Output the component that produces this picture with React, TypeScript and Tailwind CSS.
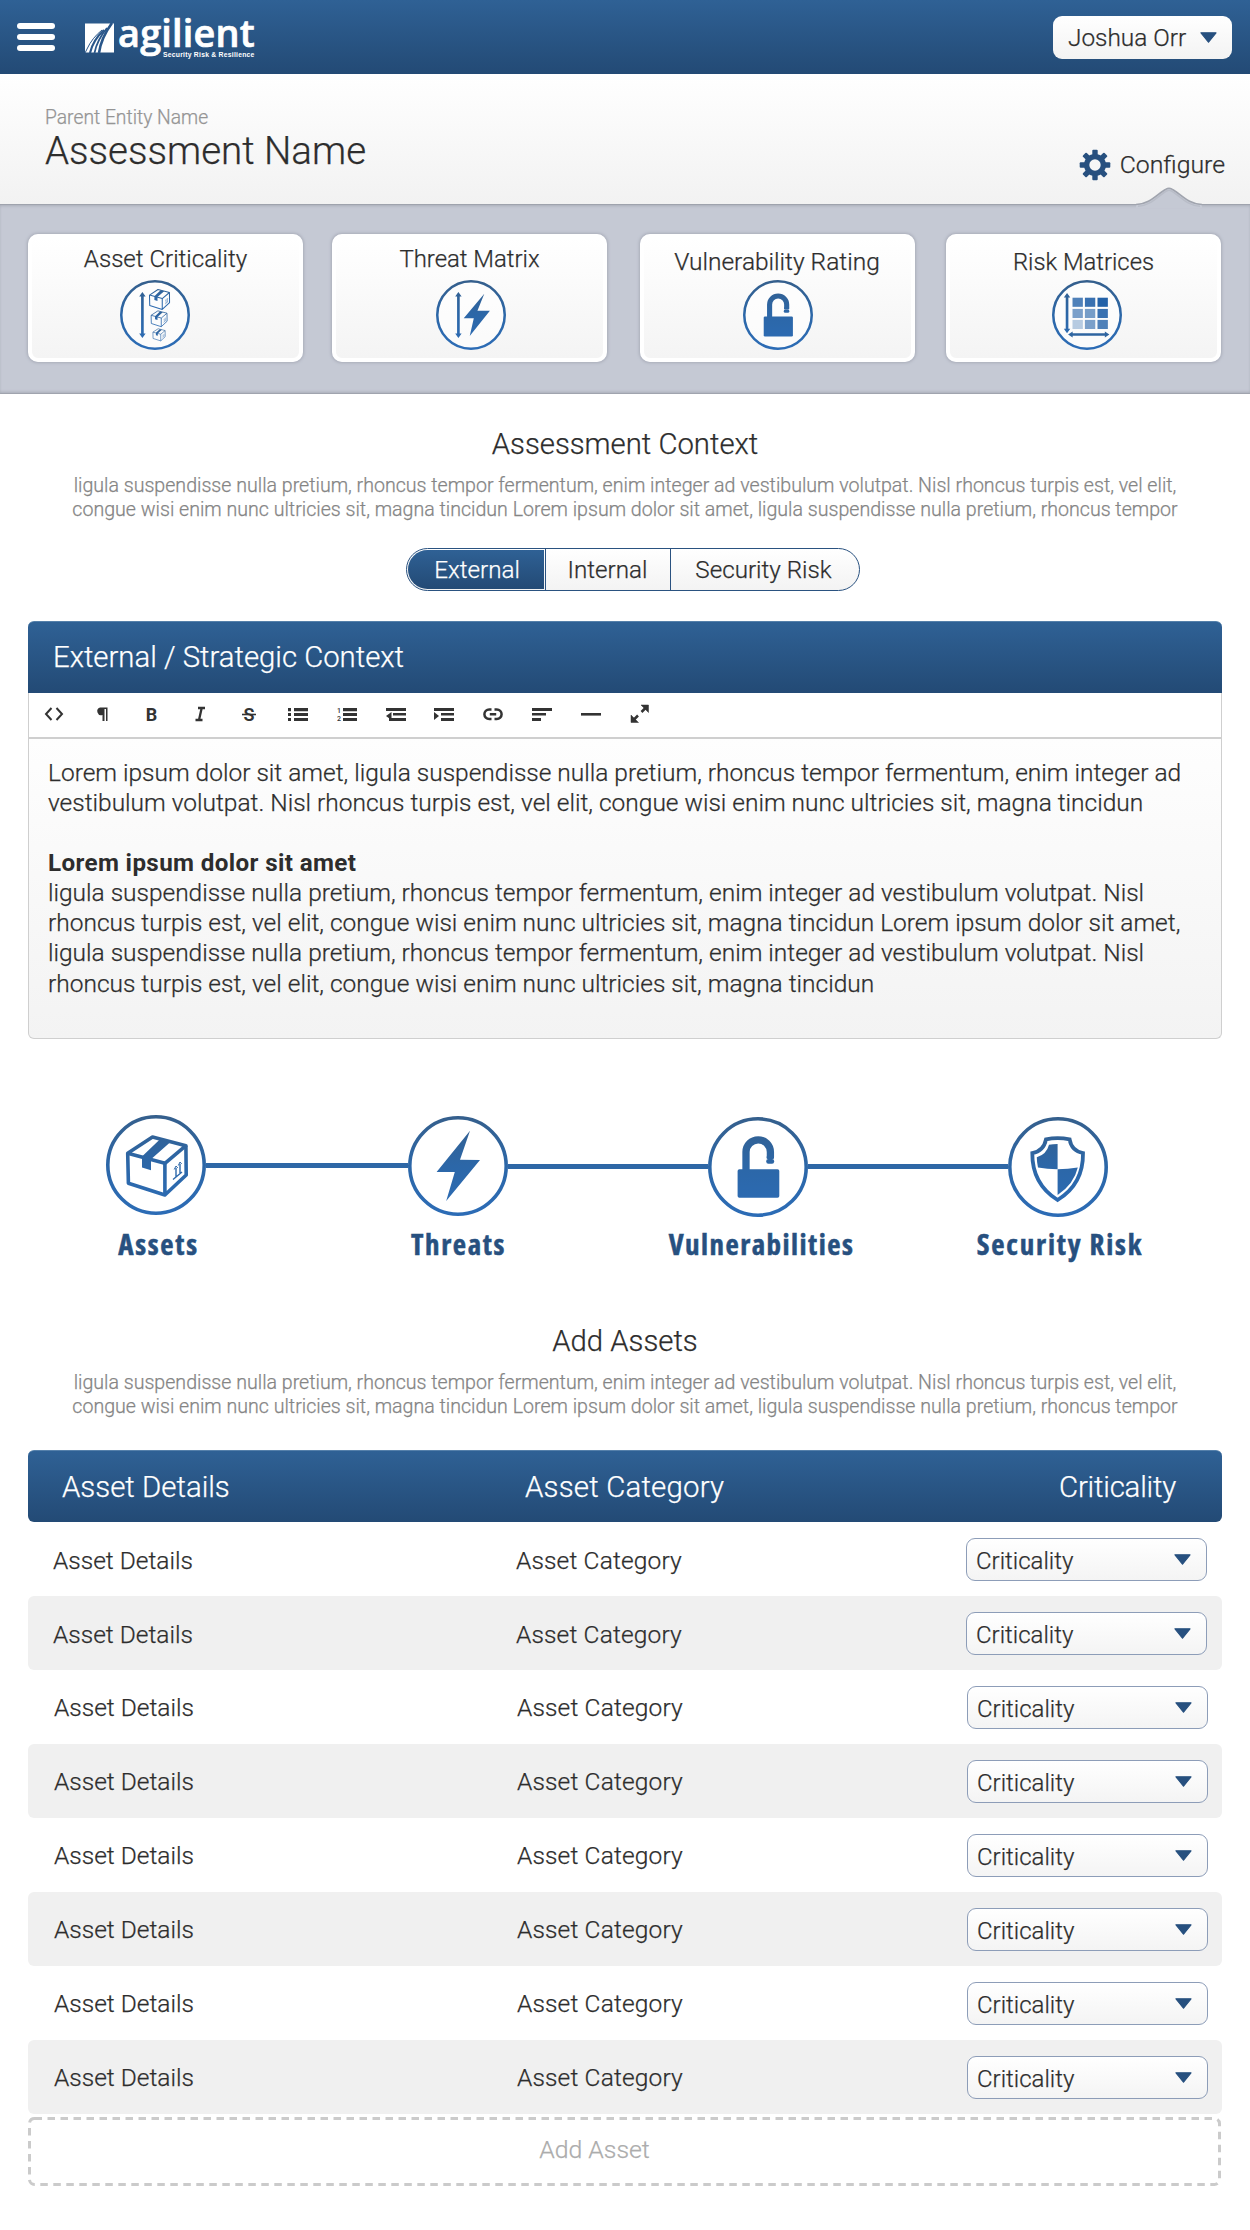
import React from 'react';

const LOREM = [
  'ligula suspendisse nulla pretium, rhoncus tempor fermentum, enim integer ad vestibulum volutpat. Nisl rhoncus turpis est, vel elit,',
  'congue wisi enim nunc ultricies sit, magna tincidun Lorem ipsum dolor sit amet, ligula suspendisse nulla pretium, rhoncus tempor',
];

const INK = 'url(#ink)';

/* Shared vertical gradient for every circular badge. */
function Defs() {
  return (
    <svg width="0" height="0" className="absolute">
      <defs>
        <linearGradient id="ink" gradientUnits="userSpaceOnUse" x1="0" y1="0" x2="0" y2="100">
          <stop offset="0" stopColor="#355f8c" />
          <stop offset="0.5" stopColor="#2c67a8" />
          <stop offset="1" stopColor="#2c6cb6" />
        </linearGradient>
      </defs>
    </svg>
  );
}

function Box({ weight = 3.6 }: { weight?: number }) {
  return (
    <g fill="none" stroke={INK} strokeWidth={weight} strokeLinejoin="round">
      <path d="M46.5 22 79.9 30.7 58.9 48.3 21.7 38.3Z" />
      <path d="M21.7 38.3 22.4 68.3 58.9 80V48.3M58.9 80 80.2 60 79.9 30.7" />
      <path d="M54 24.3 64.5 27 45 44.2V55.2L36 52.5V41.6Z" fill={INK} stroke="none" />
      <path d="M70 61.5V53M74 58V49M67 64.5 76 57" strokeWidth="1.4" />
      <path d="m68.2 54.5 1.8-3.5 1.8 2M72.3 50.5 74 47l1.7 2" strokeWidth="1" />
    </g>
  );
}

function Bolt() {
  return <path d="M62 14.7 52 43.7 72 44 38.2 85 46.8 56H28.6Z" fill={INK} />;
}

function Lock() {
  return (
    <g>
      <rect x="29.6" y="52.3" width="41.7" height="28.4" rx="1.8" fill={INK} />
      <path d="M38 53V35a12.2 12.2 0 0 1 24.4 0V40.5" fill="none" stroke={INK} strokeWidth="7.3" />
      <rect x="58.6" y="39" width="7.4" height="3" rx="1" fill={INK} />
      <rect x="58.2" y="42" width="8" height="4.8" rx="2.2" fill={INK} />
    </g>
  );
}

function Shield() {
  return (
    <g>
      <path
        d="M38 22.3Q49.6 20 61.6 22.3 63.5 34 75 36 75.5 67 49.6 83 24 67 24.3 36 35.7 34 38 22.3Z"
        fill="none"
        stroke={INK}
        strokeWidth="3.8"
      />
      <path d="M49.6 27V52.3Q39 52 30 50.5 28.8 45 28.8 40.3 38.5 37.5 41 27.8 45 27 49.6 27Z" fill={INK} />
      <path d="M49.6 52.3Q60 52 69.8 50.5 66 67 49.6 78Z" fill={INK} />
    </g>
  );
}

function Ring({ children, thickness = 3.6 }: { children: React.ReactNode; thickness?: number }) {
  return (
    <>
      <circle cx="50" cy="50" r={50 - thickness / 2} fill="#fff" fillOpacity="0.6" stroke={INK} strokeWidth={thickness} />
      {children}
    </>
  );
}

function VArrow({ x, y1, y2 }: { x: number; y1: number; y2: number }) {
  return (
    <g fill={INK}>
      <path d={`M${x - 1.9} ${y1 + 4}h3.8V${y2 - 4}h-3.8Z`} />
      <path d={`M${x} ${y1}l4.6 6.5h-9.2zM${x} ${y2}l4.6-6.5h-9.2z`} />
    </g>
  );
}

function CriticalityIcon() {
  return (
    <Ring>
      <VArrow x={32} y1={17} y2={83} />
      <g transform="translate(31.5 2.8) scale(0.49)"><Box weight={3} /></g>
      <g transform="translate(36 35.5) scale(0.39)"><Box weight={3} /></g>
      <g transform="translate(40.5 63) scale(0.3)"><Box weight={3} /></g>
    </Ring>
  );
}

function ThreatIcon() {
  return (
    <Ring>
      <VArrow x={32} y1={17} y2={83} />
      <path d="M69 19.5 59.2 44 77 44 48.2 80 54 54.5H39.6Z" fill={INK} />
    </Ring>
  );
}

function MatrixIcon() {
  const xs = [29.3, 47, 65];
  const ys = [25.3, 41.3, 57];
  const alpha = [[0.8, 0.9, 1], [0.6, 0.62, 0.9], [0.32, 0.6, 0.8]];
  return (
    <Ring>
      {ys.map((y, r) =>
        xs.map((x, c) => <rect key={`${r}${c}`} x={x} y={y} width="14.8" height="13" fill="#2462a8" opacity={alpha[r][c]} />),
      )}
      <VArrow x={21.5} y1={18.5} y2={76} />
      <g fill="#2f65a0">
        <path d="M27 76H77v3.6H27z" />
        <path d="M23 77.8l6.5-4.3v8.6zM82 77.8l-6.5-4.3v8.6z" />
      </g>
    </Ring>
  );
}

function Caret() {
  return (
    <svg width="17" height="11" viewBox="0 0 17 11" className="shrink-0">
      <path d="M1 .8h15L8.5 10.2z" fill="#27507f" stroke="#27507f" strokeLinejoin="round" strokeWidth="1.2" />
    </svg>
  );
}

function Header() {
  return (
    <header className="flex h-[74px] bg-linear-to-b from-[#2f6195] to-[#234a75] pl-[17px] pr-[18px]">
      <div className="mt-[23px] flex w-[38px] flex-col gap-[5px]">
        <span className="h-[6px] rounded-full bg-white" />
        <span className="h-[6px] rounded-full bg-white" />
        <span className="h-[6px] rounded-full bg-white" />
      </div>
      <svg width="30" height="30" viewBox="0 0 30 30" className="ml-[30px] mt-[23px]">
        <rect x="0" y="0.5" width="29" height="29" fill="#fff" />
        <g fill="none" stroke="#29568a">
          <path d="M0 30 2 26Q7 15 17 7" strokeWidth="1" />
          <path d="M5 30Q8 17 19 7" strokeWidth="2.2" />
          <path d="M9.5 30Q12 17 22 5" strokeWidth="1.8" />
          <path d="M14 30Q16 15 27 0" strokeWidth="2.6" />
        </g>
      </svg>
      <div className="relative ml-[3px] h-[74px]">
        <div className="mt-[8px] font-['Open_Sans'] text-[37.8px] font-semibold leading-[50px] tracking-[0.2px] text-white [-webkit-text-stroke:0.7px_white]">agilient</div>
        <div className="absolute left-[45px] top-[50px] whitespace-nowrap font-['Liberation_Sans'] text-[6.8px] font-bold leading-[9px] tracking-[0.24px] text-white [-webkit-text-stroke:0px]">
          Security Risk &amp; Resilience
        </div>
      </div>
      <div className="ml-auto mt-[16px] flex h-[43px] w-[179px] items-center justify-between rounded-[9px] bg-linear-to-b from-white to-[#f3f3f3] pl-[15px] pr-[15px] text-[24.4px]">
        <span className="pt-[2px]">Joshua Orr</span>
        <Caret />
      </div>
    </header>
  );
}

function Gear() {
  return (
    <svg width="32" height="32" viewBox="-16 -16 32 32">
      <g fill="#27507f">
        {[0, 45, 90, 135].map((a) => (
          <rect key={a} x="-2.7" y="-15.3" width="5.4" height="30.6" rx="1" transform={`rotate(${a})`} />
        ))}
      </g>
      <circle r="8.3" fill="none" stroke="#27507f" strokeWidth="5.4" />
      <circle r="5.7" fill="#f6f6f6" />
    </svg>
  );
}

function TitleBar() {
  return (
    <section className="relative h-[130px] bg-linear-to-b from-white to-[#f2f2f2] pl-[45px] pt-[32px]">
      <div className="text-[19.3px] leading-[23px] text-[#959595]">Parent Entity Name</div>
      <h1 className="text-[38.5px] leading-[44px]">Assessment Name</h1>
      <div className="absolute right-[25px] top-[74px] flex items-center gap-[9px]">
        <Gear />
        <span className="text-[24.8px] leading-[34px]">Configure</span>
      </div>
      <svg width="66" height="22" viewBox="0 0 66 22" className="absolute left-[1136px] top-[112px]">
        <path d="M0 18.5C14 18.5 22 7 30 3.2Q33 1.2 36 3.2C44 7 52 18.5 66 18.5V22H0Z" fill="#c5c9d4" />
        <path d="M0 18.5C14 18.5 22 7 30 3.2Q33 1.2 36 3.2C44 7 52 18.5 66 18.5" fill="none" stroke="#a0a4ae" strokeWidth="1.6" />
        <path d="M2 20.2C15 20 23 8.7 30.5 5Q33 3.5 35.5 5C43 8.7 51 20 64 20.2" fill="none" stroke="#b9bdc8" strokeWidth="1.5" />
      </svg>
    </section>
  );
}

const CARDS = [
  { title: 'Asset Criticality', icon: <CriticalityIcon />, card: 'ml-[28px]', text: 'mt-[7px] text-[24.1px]', pic: 'top-[42px] left-[88px]' },
  { title: 'Threat Matrix', icon: <ThreatIcon />, card: 'ml-[29px]', text: 'mt-[7px] text-[23.9px]', pic: 'top-[42px] left-[99.5px]' },
  { title: 'Vulnerability Rating', icon: <Ring><Lock /></Ring>, card: 'ml-[33px]', text: 'mt-[10px] text-[24.5px] pr-[1px]', pic: 'top-[42px] left-[99px]' },
  { title: 'Risk Matrices', icon: <MatrixIcon />, card: 'ml-[31px]', text: 'mt-[10px] text-[23.8px]', pic: 'top-[42px] left-[102px]' },
];

function ConfigureBand() {
  return (
    <section className="flex h-[190px] bg-[#c5c9d4] pt-[30px] shadow-[inset_0_1px_0_#9fa3ad,inset_0_3px_3px_-1px_#a9adb8,inset_0_-1px_0_#a0a4ae,inset_0_-3px_3px_-1px_#a9adb8]">
      {CARDS.map((c) => (
        <div
          key={c.title}
          className={`relative h-[128px] w-[275px] shrink-0 rounded-[10px] border-4 border-white bg-linear-to-b from-white to-[#f4f4f4] text-center shadow-[0_0_3px_1px_#a9adb9] ${c.card}`}
        >
          <div className={`leading-[28px] ${c.text}`}>{c.title}</div>
          <svg width="70" height="70" viewBox="0 0 100 100" className={`absolute ${c.pic}`}>
            {c.icon}
          </svg>
        </div>
      ))}
    </section>
  );
}

function Intro({ title, className }: { title: string; className: string }) {
  return (
    <div className={`text-center ${className}`}>
      <h2 className="text-[29.3px] leading-[36px]">{title}</h2>
      <p className="mt-[12px] whitespace-nowrap text-[19.6px] leading-[24px] text-[#858585]">
        {LOREM[0]}
        <br />
        {LOREM[1]}
      </p>
    </div>
  );
}

function Tabs() {
  return (
    <div className="ml-[406px] mt-[26px] flex h-[43px] w-[454px] items-stretch rounded-full border border-[#2a5280] bg-linear-to-b from-white to-[#f3f3f3] text-[24.2px] leading-[43px]">
      <div className="flex w-[139px] border-r border-[#2a5280] p-px">
        <div className="flex-1 rounded-l-full bg-linear-to-b from-[#2f6195] to-[#234a75] pl-[2px] text-center leading-[41px] text-white">External</div>
      </div>
      <div className="w-[125px] border-r border-[#2a5280] pr-[1px] text-center">Internal</div>
      <div className="flex-1 pr-[3px] text-center">Security Risk</div>
    </div>
  );
}

const TOOLS: React.ReactNode[] = [
  <path d="M7.5 4 2 10l5.5 6M12.5 4 18 10l-5.5 6" fill="none" stroke="#333" strokeWidth="2" />,
  <path d="M7 3.5h7.5V17h-1.5V5h-1.5V17H9.5v-6A3.8 3.8 0 0 1 7 3.5Z" fill="#333" />,
  <text x="9.5" y="16.5" textAnchor="middle" fontSize="18" fontWeight="700" fill="#333" fontFamily="Roboto">B</text>,
  <path d="M8 4h7M5.5 16h7M11.7 4 9 16" stroke="#333" strokeWidth="2.3" fill="none" />,
  <g>
    <text x="10" y="16.5" textAnchor="middle" fontSize="18" fontWeight="600" fill="#333" fontFamily="Roboto">S</text>
    <path d="M3 10.5h14" stroke="#333" strokeWidth="1.6" />
  </g>,
  <g fill="#333"><path d="M6 4h14v3.2H6zM6 9h14v3H6zM6 14h14v3H6zM0 4h3v3.2H0zM0 9h3v3H0zM0 14h3v3H0z" /></g>,
  <g fill="#333">
    <path d="M6 4h14v3.2H6zM6 9h14v3H6zM6 14h14v3H6z" />
    <text x="0" y="8.5" fontSize="7" fontWeight="500" fontFamily="Roboto">1</text>
    <text x="0" y="17" fontSize="7" fontWeight="500" fontFamily="Roboto">2</text>
  </g>,
  <g fill="#333"><path d="M0 4h20v3H0zM7 9h13v2.6H7zM7 14h13v3H3v-3zM0 12 5.5 8v8z" /></g>,
  <g fill="#333"><path d="M0 4h20v3H0zM7 9h13v2.6H7zM7 14h13v3H7zM0 8v8l5-4z" /></g>,
  <g fill="none" stroke="#333" strokeWidth="2.5"><path d="M8.5 15H6.2a4.8 4.8 0 0 1 0-9.6h2.3M11.5 5.4h2.3a4.8 4.8 0 0 1 0 9.6h-2.3M6.8 10.2h6.4" /></g>,
  <g fill="#333"><path d="M0 4h20v3H0zM0 9h14v2.6H0zM0 14h9v3H0z" /></g>,
  <path d="M0 9h20v2.6H0z" fill="#333" />,
  <g fill="#333" stroke="#333"><path d="M11 1h7.5v7.5zM1 11v7.5h7.5z" strokeWidth="0.5" /><path d="m11.5 8 4-4M4 15.5l4-4" strokeWidth="2.5" /></g>,
];

function Editor() {
  return (
    <section className="ml-[28px] mt-[30px] h-[418px] w-[1194px]">
      <div className="h-[72px] rounded-t-[6px] border-t border-[#5580aa] bg-linear-to-b from-[#2f6195] to-[#234a75] pl-[25px] text-[29.3px] leading-[71px] text-white">
        External / Strategic Context
      </div>
      <div className="flex h-[46px] items-center gap-[28.8px] border-x border-b-2 border-[#cfcfcf] bg-white pb-[2px] pl-[15px]">
        {TOOLS.map((t, i) => (
          <svg key={i} width="20" height="20" viewBox="0 0 20 20" className="shrink-0">
            {t}
          </svg>
        ))}
      </div>
      <div className="h-[300px] whitespace-nowrap rounded-b-[6px] border border-t-0 border-[#cfcfcf] bg-linear-to-b from-[#fefefe] to-[#f3f3f3] pl-[19px] pt-[19px] text-[24.49px] leading-[30.1px]">
        <p>
          Lorem ipsum dolor sit amet, ligula suspendisse nulla pretium, rhoncus tempor fermentum, enim integer ad
          <br />
          vestibulum volutpat. Nisl rhoncus turpis est, vel elit, congue wisi enim nunc ultricies sit, magna tincidun
        </p>
        <p className="mt-[30px] text-[24.2px] font-bold tracking-[0.37px] [-webkit-text-stroke:0px]">Lorem ipsum dolor sit amet</p>
        <p>
          ligula suspendisse nulla pretium, rhoncus tempor fermentum, enim integer ad vestibulum volutpat. Nisl
          <br />
          rhoncus turpis est, vel elit, congue wisi enim nunc ultricies sit, magna tincidun Lorem ipsum dolor sit amet,
          <br />
          ligula suspendisse nulla pretium, rhoncus tempor fermentum, enim integer ad vestibulum volutpat. Nisl
          <br />
          rhoncus turpis est, vel elit, congue wisi enim nunc ultricies sit, magna tincidun
        </p>
      </div>
    </section>
  );
}

const STEPS = [
  { label: 'Assets', icon: <Box />, top: 'mt-0', text: 'mt-[11px] ml-[5px] tracking-[1.7px]', line: '' },
  { label: 'Threats', icon: <Bolt />, top: 'mt-px', text: 'mt-[10px] ml-[1px] tracking-[1.6px]', line: 'mt-[48px] w-[202px]' },
  { label: 'Vulnerabilities', icon: <Lock />, top: 'mt-[2px]', text: 'mt-[9px] ml-[7px] tracking-[1.45px]', line: 'mt-[49px] flex-1' },
  { label: 'Security Risk', icon: <Shield />, top: 'mt-[2px]', text: 'mt-[9px] ml-[4px] tracking-[1.8px]', line: 'mt-[49px] flex-1' },
];

function Stepper() {
  return (
    <div className="ml-[106px] mt-[76px] flex h-[146px] w-[1002px]">
      {STEPS.map((s, i) => (
        <React.Fragment key={s.label}>
          {i > 0 && <div className={`h-[5px] bg-[#2e67a6] ${s.line}`} />}
          <div className={`flex w-[100px] shrink-0 flex-col items-center ${s.top}`}>
            <svg width="100" height="100" viewBox="0 0 100 100" className="shrink-0">
              <Ring>{s.icon}</Ring>
            </svg>
            <span className={`whitespace-nowrap font-['Open_Sans'] text-[29px] font-bold leading-[36px] text-[#27507f] [-webkit-text-stroke:0.5px_#27507f] [font-stretch:75%] ${s.text}`}>
              {s.label}
            </span>
          </div>
        </React.Fragment>
      ))}
    </div>
  );
}

function AssetTable() {
  return (
    <section className="ml-[28px] mt-[31px] w-[1194px]">
      <div className="grid h-[72px] grid-cols-[463px_534px_auto] rounded-[6px] border-t border-[#5580aa] bg-linear-to-b from-[#2f6195] to-[#234a75] pl-[34px] text-[29.4px] leading-[72px] text-white">
        <span>Asset Details</span>
        <span className="tracking-[0.2px]">Asset Category</span>
        <span className="tracking-[-0.2px]">Criticality</span>
      </div>
      {Array.from({ length: 8 }, (_, i) => (
        <div
          key={i}
          className={`grid h-[74px] grid-cols-[463px_450px_241px] items-center rounded-[6px] text-[24.5px] ${i % 2 ? 'bg-[#f0f0f0]' : ''} ${i > 1 ? 'pl-[26px]' : 'pl-[25px]'}`}
        >
          <span className={i > 1 ? 'pt-[2px]' : 'pt-[4px]'}>Asset Details</span>
          <span className={i > 1 ? 'pt-[2px] tracking-[0.15px]' : 'pt-[4px] tracking-[0.15px]'}>Asset Category</span>
          <div className="flex h-[43px] items-center justify-between rounded-[9px] border border-[#8d9db8] bg-linear-to-b from-white to-[#f4f4f4] pl-[9px] pr-[15px]">
            <span className="pt-[3px] text-[24px]">Criticality</span>
            <Caret />
          </div>
        </div>
      ))}
      <div className="relative mt-[3px] h-[70px] w-[1193px] text-center text-[24.8px] leading-[66px] text-[#acacac]">
        <svg width="1193" height="70" className="absolute left-0 top-0">
          <rect x="1.5" y="1.5" width="1190" height="66" rx="5" fill="none" stroke="#cbcbcb" strokeWidth="3" strokeDasharray="7.5 5.5" />
        </svg>
        <span className="mr-[60px]">Add Asset</span>
      </div>
    </section>
  );
}

export default function App() {
  return (
    <div className="h-[2230px] w-[1250px] overflow-hidden bg-white font-['Roboto',sans-serif] font-light text-[#2d2d2d] [-webkit-text-stroke:0.25px]">
      <Defs />
      <Header />
      <TitleBar />
      <ConfigureBand />
      <Intro title="Assessment Context" className="pt-[32px]" />
      <Tabs />
      <Editor />
      <Stepper />
      <Intro title="Add Assets" className="mt-[62px]" />
      <AssetTable />
    </div>
  );
}
